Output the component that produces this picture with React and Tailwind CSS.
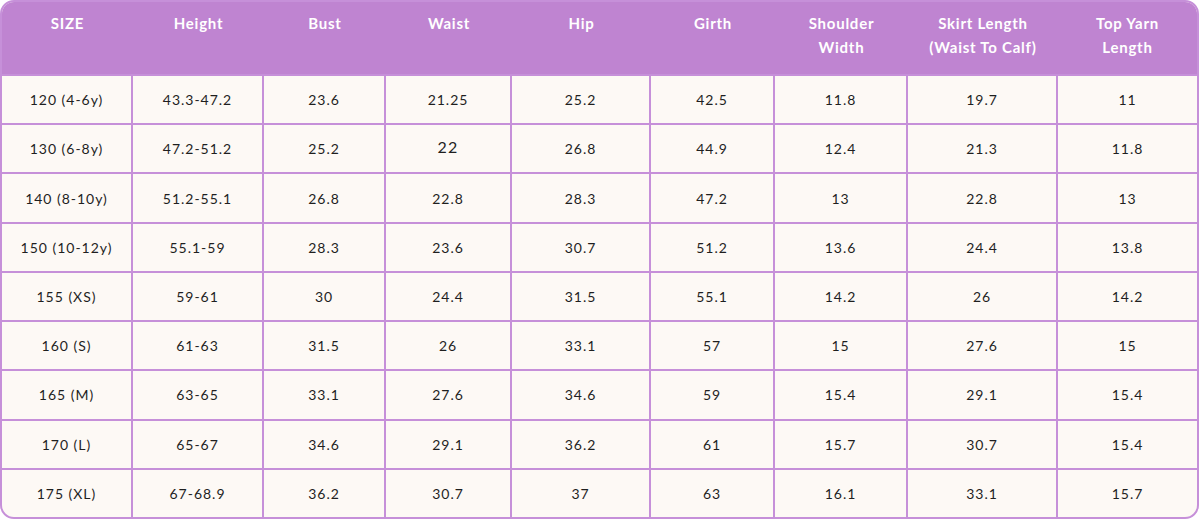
const columns = [
  { label: ["SIZE"] },
  { label: ["Height"] },
  { label: ["Bust"] },
  { label: ["Waist"] },
  { label: ["Hip"] },
  { label: ["Girth"] },
  { label: ["Shoulder", "Width"] },
  { label: ["Skirt Length", "(Waist To Calf)"] },
  { label: ["Top Yarn", "Length"] },
];

const rows = [
  ["120 (4-6y)", "43.3-47.2", "23.6", "21.25", "25.2", "42.5", "11.8", "19.7", "11"],
  ["130 (6-8y)", "47.2-51.2", "25.2", "22", "26.8", "44.9", "12.4", "21.3", "11.8"],
  ["140 (8-10y)", "51.2-55.1", "26.8", "22.8", "28.3", "47.2", "13", "22.8", "13"],
  ["150 (10-12y)", "55.1-59", "28.3", "23.6", "30.7", "51.2", "13.6", "24.4", "13.8"],
  ["155 (XS)", "59-61", "30", "24.4", "31.5", "55.1", "14.2", "26", "14.2"],
  ["160 (S)", "61-63", "31.5", "26", "33.1", "57", "15", "27.6", "15"],
  ["165 (M)", "63-65", "33.1", "27.6", "34.6", "59", "15.4", "29.1", "15.4"],
  ["170 (L)", "65-67", "34.6", "29.1", "36.2", "61", "15.7", "30.7", "15.4"],
  ["175 (XL)", "67-68.9", "36.2", "30.7", "37", "63", "16.1", "33.1", "15.7"],
];

export default function App() {
  return (
    <div className="w-[1200px] h-[520px] bg-white font-['Lato','Liberation_Sans',sans-serif]">
      <div className="w-[1199px] h-[519px] border-2 border-[#c690d9] rounded-[14px] overflow-hidden bg-[#fdf9f5] grid grid-cols-[131px_131px_122px_126px_139px_124px_133px_150px_139px] grid-rows-[72px_repeat(9,1fr)]">
        {columns.map((c, i) => (
          <div
            key={i}
            className="bg-[#bf84d1] text-white font-bold text-[15px] tracking-[0.05em] leading-[24px] text-center pt-[9px]"
          >
            {c.label.map((l, j) => (
              <div key={j}>{l}</div>
            ))}
          </div>
        ))}
        {rows.map((r, ri) =>
          r.map((v, ci) => (
            <div
              key={ri + "-" + ci}
              className={
                "flex items-center justify-center text-[14px] tracking-[0.07em] text-[#1f1f1f] border-t-2 border-[#c690d9] " +
                (ci < 8 ? "border-r-2 " : "") +
                (ri === 1 && ci === 3 ? "text-[16px] pb-[4px]" : "")
              }
            >
              {v}
            </div>
          ))
        )}
      </div>
    </div>
  );
}
